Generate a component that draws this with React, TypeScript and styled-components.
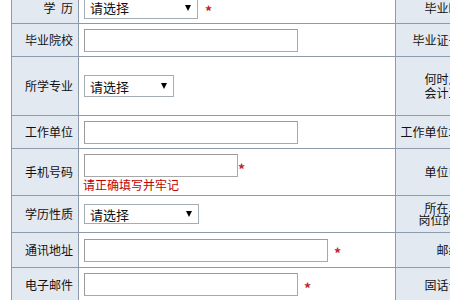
import React from "react";
import styled, { createGlobalStyle } from "styled-components";

const GlobalStyle = createGlobalStyle`
  * { box-sizing: border-box; }
  html, body {
    margin: 0;
    padding: 0;
    background: #ffffff;
    overflow: hidden;
    font-family: "Noto Sans CJK SC", "Noto Sans", sans-serif;
    font-size: 12px;
    color: #111;
  }
`;

const Form = styled.table`
  margin: -8px 0 0 11px;
  width: 900px;
  table-layout: fixed;
  border-collapse: separate;
  border-spacing: 0;
  border-left: 1px solid #8c9aab;
`;

const Row = styled.tr<{ $h: number }>`
  height: ${(p) => p.$h}px;
`;

const Label = styled.td`
  background: #e3e9f1;
  border-right: 1px solid #8c9aab;
  border-bottom: 1px solid #8c9aab;
  text-align: right;
  padding: 0 5px 0 0;
  vertical-align: middle;
  white-space: nowrap;
  line-height: 14px;
`;

const SideLabel = styled(Label)<{ $lh?: number }>`
  text-align: center;
  padding: 0;
  line-height: ${(p) => p.$lh ?? 14}px;
`;

const Field = styled.td`
  border-right: 1px solid #8c9aab;
  border-bottom: 1px solid #8c9aab;
  padding: 0 0 0 5px;
  vertical-align: middle;
  white-space: nowrap;
`;

const Input = styled.input<{ $w: number }>`
  width: ${(p) => p.$w}px;
  height: 23px;
  margin: 0;
  padding: 1px 3px;
  border: 1px solid #a9a9a9;
  border-top-color: #9a9a9a;
  border-left-color: #9a9a9a;
  background: #fff;
  font: inherit;
  vertical-align: middle;
  outline: none;
`;

const SelectBox = styled.span<{ $w: number; $h: number }>`
  position: relative;
  display: inline-block;
  width: ${(p) => p.$w}px;
  height: ${(p) => p.$h}px;
  vertical-align: middle;

  select {
    appearance: none;
    -webkit-appearance: none;
    width: 100%;
    height: 100%;
    margin: 0;
    padding: 0 0 0 5px;
    border: 1px solid #a5acb2;
    border-radius: 0;
    background: #fff;
    font: inherit;
    font-size: 13px;
    color: #111;
    outline: none;
  }

  &::after {
    content: "";
    position: absolute;
    right: 7px;
    top: 50%;
    margin-top: -3px;
    border-left: 3.5px solid transparent;
    border-right: 3.5px solid transparent;
    border-top: 6px solid #000;
    pointer-events: none;
  }
`;

const Star = styled.span<{ $gap: number }>`
  display: inline-block;
  margin-left: ${(p) => p.$gap}px;
  padding-top: 6px;
  color: #c0262d;
  font-size: 14px;
  font-weight: bold;
  line-height: 14px;
  vertical-align: middle;
`;

const Hint = styled.div`
  color: #c00000;
  font-size: 12px;
  line-height: 13px;
  margin: 1px 0 0 -1px;
`;

const Stack = styled.div`
  padding-top: 1px;
`;

const Select = ({ w, h }: { w: number; h: number }) => (
  <SelectBox $w={w} $h={h}>
    <select defaultValue="">
      <option value="">请选择</option>
    </select>
  </SelectBox>
);

export default function App() {
  return (
    <>
      <GlobalStyle />
      <Form>
        <colgroup>
          <col style={{ width: 67 }} />
          <col style={{ width: 317 }} />
          <col style={{ width: 106 }} />
          <col />
        </colgroup>
        <tbody>
          <Row $h={32}>
            <Label>学&nbsp;&nbsp;历</Label>
            <Field>
              <Select w={114} h={22} />
              <Star $gap={7}>*</Star>
            </Field>
            <SideLabel>毕业时间</SideLabel>
            <Field />
          </Row>
          <Row $h={33}>
            <Label>毕业院校</Label>
            <Field>
              <Input $w={214} />
            </Field>
            <SideLabel>毕业证书编号</SideLabel>
            <Field />
          </Row>
          <Row $h={59}>
            <Label>所学专业</Label>
            <Field>
              <Select w={90} h={22} />
            </Field>
            <SideLabel>
              何时从事
              <br />
              会计工作
            </SideLabel>
            <Field />
          </Row>
          <Row $h={33}>
            <Label>工作单位</Label>
            <Field>
              <Input $w={214} />
            </Field>
            <SideLabel>工作单位地址邮编</SideLabel>
            <Field />
          </Row>
          <Row $h={47}>
            <Label>手机号码</Label>
            <Field>
              <Stack>
                <Input $w={154} />
                <Star $gap={0}>*</Star>
                <Hint>请正确填写并牢记</Hint>
              </Stack>
            </Field>
            <SideLabel>单位电话</SideLabel>
            <Field />
          </Row>
          <Row $h={37}>
            <Label>学历性质</Label>
            <Field>
              <Select w={115} h={20} />
            </Field>
            <SideLabel $lh={12}>
              所在单位
              <br />
              岗位的职务
            </SideLabel>
            <Field />
          </Row>
          <Row $h={35}>
            <Label>通讯地址</Label>
            <Field>
              <Input $w={244} />
              <Star $gap={6}>*</Star>
            </Field>
            <SideLabel>邮编</SideLabel>
            <Field />
          </Row>
          <Row $h={34}>
            <Label>电子邮件</Label>
            <Field>
              <Input $w={214} />
              <Star $gap={6}>*</Star>
            </Field>
            <SideLabel>固话号码</SideLabel>
            <Field />
          </Row>
        </tbody>
      </Form>
    </>
  );
}
